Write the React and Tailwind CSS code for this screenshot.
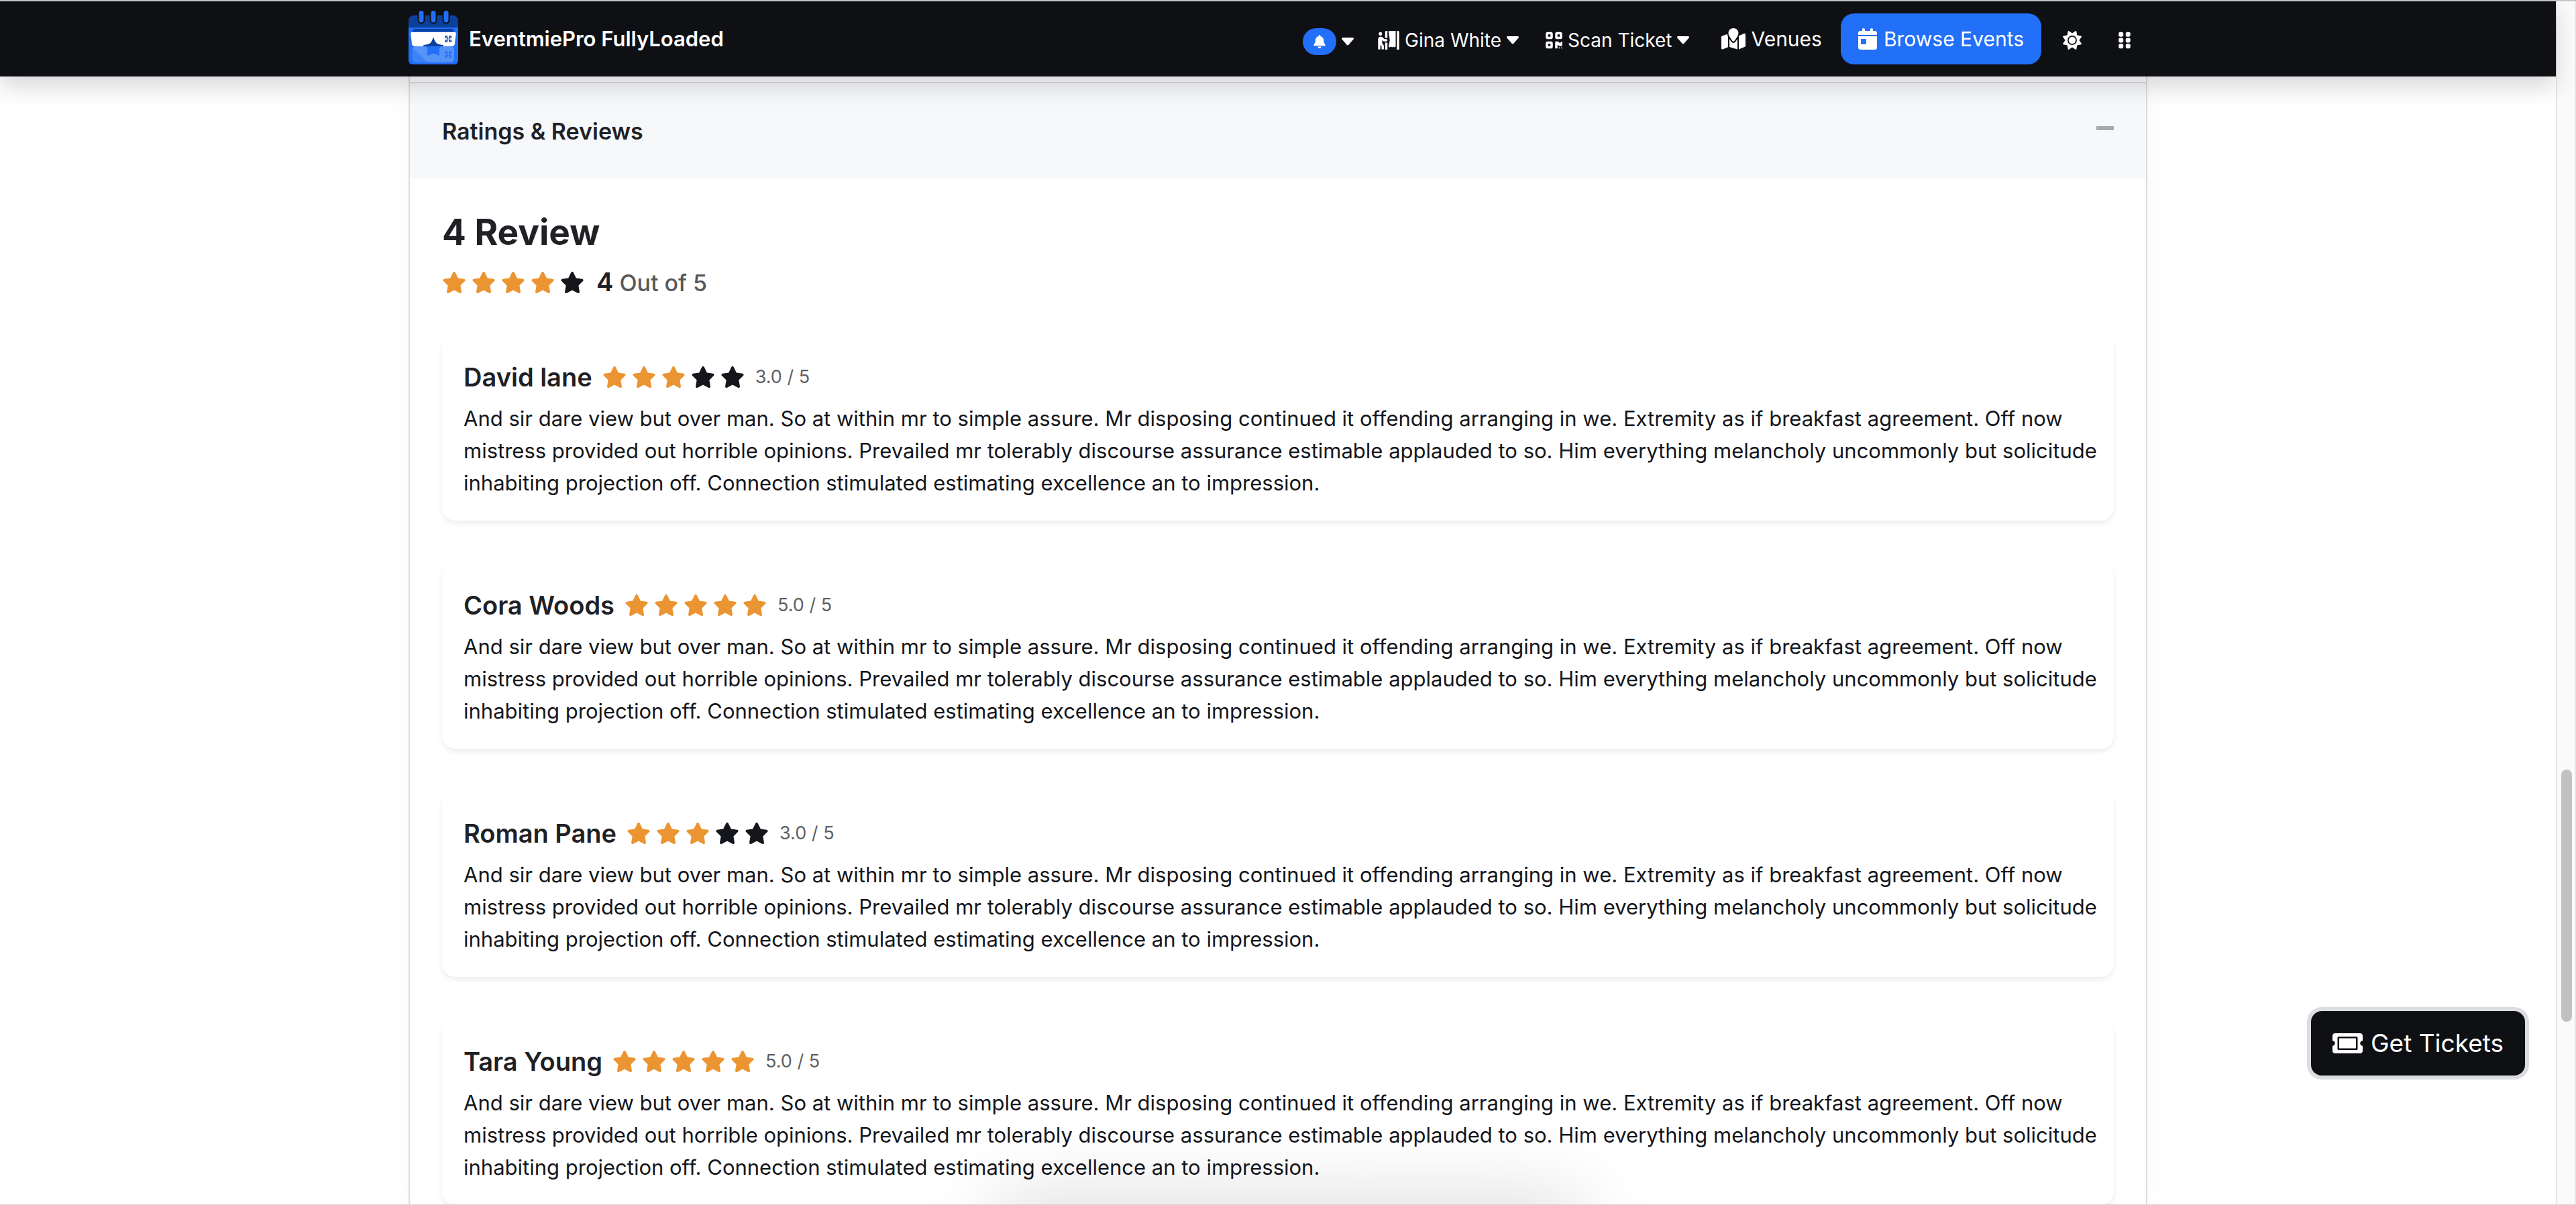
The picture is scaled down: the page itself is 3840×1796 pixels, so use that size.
import React from "react";
import { FaPersonBooth, FaTicketAlt } from "react-icons/fa";
import { FaBell, FaCalendarDay, FaGripVertical, FaMapLocation, FaQrcode, FaStar, FaSun } from "react-icons/fa6";

const REVIEW_TEXT =
  "And sir dare view but over man. So at within mr to simple assure. Mr disposing continued it offending arranging in we. Extremity as if breakfast agreement. Off now mistress provided out horrible opinions. Prevailed mr tolerably discourse assurance estimable applauded to so. Him everything melancholy uncommonly but solicitude inhabiting projection off. Connection stimulated estimating excellence an to impression.";

const REVIEWS = [
  { name: "David lane", rating: 3 },
  { name: "Cora Woods", rating: 5 },
  { name: "Roman Pane", rating: 3 },
  { name: "Tara Young", rating: 5 },
];

function Caret() {
  return (
    <svg viewBox="0 0 18 12" className="h-3 w-[18px]" fill="currentColor" aria-hidden="true">
      <path d="M1.5 0h15c1.3 0 2 1.4 1.1 2.4L10.4 10.8c-.8.9-2 .9-2.8 0L.4 2.4C-.5 1.4.2 0 1.5 0z" />
    </svg>
  );
}

function LogoCode({ y, color }) {
  return (
    <g transform={`translate(54 ${y})`} fill="none" stroke={color} strokeWidth="1.5">
      <circle cx="2.2" cy="2.2" r="1.4" />
      <circle cx="8.2" cy="2.2" r="1.4" />
      <circle cx="2.2" cy="8.2" r="1.4" />
      <circle cx="8.2" cy="8.2" r="1.4" />
      <path d="M3 3l1.600 1.600M7.400 3L5.800 4.600M3 7.400l1.600-1.600M7.400 7.400L5.800 5.800" />
    </g>
  );
}

function Logo() {
  return (
    <svg viewBox="0 0 74 80" className="-mt-1 h-20 w-[74px]" aria-hidden="true">
      <path d="M0 25h74v49a6 6 0 0 1-6 6H6a6 6 0 0 1-6-6z" fill="#226ff8" />
      <path d="M8 7h58a8 8 0 0 1 8 8v10H0V15a8 8 0 0 1 8-8z" fill="#0b419d" />
      {[19, 37, 56].map((x) => (
        <g key={x}>
          <path d={`M${x - 5.5} 6v8a5.5 5.5 0 0 0 11 0V6z`} fill="#0f1014" />
          <rect x={x - 3.5} y="0" width="7" height="17.5" rx="3.5" fill="#226ff8" />
        </g>
      ))}
      <path d="M10 27h54q3 0 4 4H6q1-4 4-4z" fill="#0b419d" />
      <path d="M5 32h64q2 0 1.7 2l-1.7 15q-.5 4-4 4H9q-3.500 0-4-4L3.300 34Q3 32 5 32z" fill="#fff" />
      <rect x="6" y="53" width="62" height="24" rx="5" fill="#5593f7" />
      <path d="M6.5 56L28 77H11a5 5 0 0 1-4.500-5z" fill="#3d82f7" />
      <path d="M37 39q2 7 5 9.500 2 1.500 9 2.500 1.500.5 1 2H22q-.5-1.500 1-2 7-1 9-2.500 3-2.500 5-9.500z" fill="#0b419d" />
      <path d="M26 53h22q-2.500 2.500-2.300 6l.3 8-9-3.500-9 3.500.3-8q.2-3.500-2.300-6z" fill="#226ff8" />
      <LogoCode y={37} color="#0b419d" />
      <LogoCode y={60} color="#226ff8" />
    </svg>
  );
}

function Stars({ rating }) {
  return (
    <span className="flex gap-2" role="img" aria-label={`${rating} of 5 stars`}>
      {[1, 2, 3, 4, 5].map((n) => (
        <FaStar key={n} className={n <= rating ? "h-8 w-9 text-[#eb9532]" : "h-8 w-9 text-[#14161b]"} />
      ))}
    </span>
  );
}

function Review({ name, rating }) {
  return (
    <article className="rounded-[20px] bg-white pt-[38px] pr-5 pb-8 pl-8 shadow-[0_4px_8px_rgba(0,0,0,0.075)]">
      <div className="flex items-center">
        <h4 className="mr-[15px] text-[38px] leading-12 font-semibold text-[#1f2125]">{name}</h4>
        <Stars rating={rating} />
        <span className="ml-4 text-[27px] leading-12 text-[#5f6064]">{rating}.0 / 5</span>
      </div>
      <p className="mt-[14px] text-[31px] leading-12 text-[#14161b]">{REVIEW_TEXT}</p>
    </article>
  );
}

export default function App() {
  return (
    <div className="relative flex h-screen flex-col overflow-hidden border-t-2 border-b border-t-[#c3c5c8] border-b-[#d5d5d5] bg-white font-[Inter,'Liberation_Sans',sans-serif]">
      <div className="flex min-h-0 flex-1">
        <div className="relative flex min-w-0 flex-1 flex-col">
          <header className="relative z-10 bg-[#0f1014] text-white shadow-[0_16px_32px_rgba(0,0,0,0.15)]">
            <div className="mx-auto flex h-28 max-w-[2592px] items-center justify-between">
              <a href="#home" className="flex items-center gap-4 text-[31px] font-semibold">
                <Logo />
                EventmiePro FullyLoaded
              </a>
              <nav className="flex items-center text-[28px] whitespace-nowrap">
                <button type="button" aria-label="Notifications" className="flex items-center gap-2 pt-2">
                  <span className="flex h-10 w-[50px] items-center justify-center rounded-[20px] bg-[#226ff8]">
                    <FaBell className="h-5 w-5" />
                  </span>
                  <Caret />
                </button>
                <button type="button" className="ml-9 flex items-center gap-2 pt-1">
                  <FaPersonBooth className="h-7 w-8" />
                  Gina White
                  <Caret />
                </button>
                <button type="button" className="ml-10 flex items-center gap-2 pt-1">
                  <FaQrcode className="h-7 w-[25px]" />
                  Scan Ticket
                  <Caret />
                </button>
                <a href="#venues" className="ml-12 flex items-center gap-2 text-[30px]">
                  <FaMapLocation className="h-8 w-9" />
                  Venues
                </a>
                <a href="#events" className="ml-7 flex h-[76px] items-center gap-[10px] rounded-[20px] bg-[#226ff8] px-[26px] text-[30px]">
                  <FaCalendarDay className="h-8 w-7" />
                  Browse Events
                </a>
                <button type="button" aria-label="Theme" className="ml-8 pt-1">
                  <FaSun className="h-7 w-7" />
                </button>
                <button type="button" aria-label="Menu" className="mr-6 ml-[54px] pt-1">
                  <FaGripVertical className="h-7 w-5" />
                </button>
              </nav>
            </div>
          </header>

          <main className="mx-auto min-h-0 w-full max-w-[2592px] flex-1 overflow-hidden border-x-2 border-[#dcdde0] pt-2 shadow-[0_0_32px_rgba(0,0,0,0.03)]">
            <section>
              <div className="flex items-start justify-between border-t-2 border-[#dcdde0] bg-[#f7f8fa] px-12 pt-12 pb-[46px]">
                <h2 className="text-[34px] leading-12 font-semibold text-[#1f2125]">Ratings &amp; Reviews</h2>
                <button type="button" aria-label="Collapse" className="mt-4 h-[6px] w-[26px] bg-[#a9aaac]" />
              </div>
              <div className="px-12 pt-12">
                <h3 className="text-[53px] leading-16 font-bold text-[#1f2125]">4 Review</h3>
                <div className="mt-[18px] flex items-center">
                  <Stars rating={4} />
                  <p className="ml-[18px] text-[34px] leading-12 font-medium text-[#56585c]">
                    <span className="text-[38px] font-semibold text-[#1f2125]">4</span> Out of 5
                  </p>
                </div>
                <div className="mt-[54px] flex flex-col gap-16">
                  {REVIEWS.map((review) => (
                    <Review key={review.name} {...review} />
                  ))}
                </div>
              </div>
            </section>
          </main>

          <button
            type="button"
            className="absolute right-[46px] bottom-48 z-20 flex h-24 items-center gap-3 rounded-2xl bg-[#0f1014] px-8 text-[37px] whitespace-nowrap text-white ring-6 ring-[#dcdde0]"
          >
            <FaTicketAlt className="h-10 w-[45px]" />
            Get Tickets
          </button>
        </div>

        <div className="w-[30px] shrink-0 border-r-2 border-l-2 border-[#e6e6e6] bg-[#fafafa] px-[6px] pt-[1145px]">
          <div className="h-[376px] w-4 rounded-full bg-[#c1c1c1]" />
        </div>
      </div>
      <div className="absolute top-full left-1/2 h-20 w-[870px] -translate-x-1/2 shadow-[0_0_120px_rgba(0,0,0,0.18)]" />
    </div>
  );
}
